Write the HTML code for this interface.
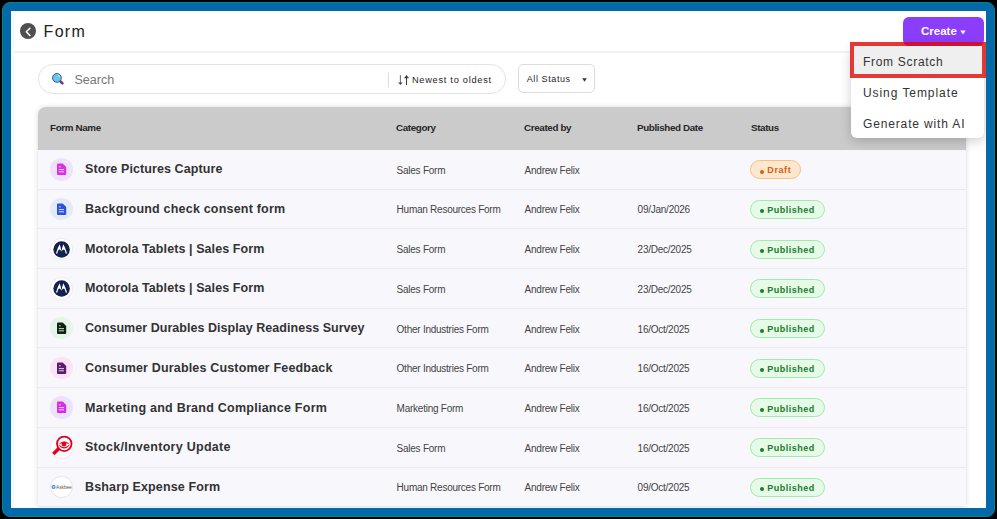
<!DOCTYPE html>
<html><head><meta charset="utf-8">
<style>
*{box-sizing:border-box;margin:0;padding:0}
html,body{width:997px;height:519px;overflow:hidden;background:#000;font-family:"Liberation Sans",sans-serif}
#frame{position:absolute;left:2px;top:2px;width:993px;height:515px;background:#036aa9;border:1px solid #08828a;border-radius:8px}
#inner{position:absolute;left:11px;top:11px;width:975px;height:497px;background:#fff;overflow:hidden}
.abs{position:absolute;white-space:nowrap}
#back{left:8.6px;top:11.5px;width:16.8px;height:16.8px;border-radius:50%;background:#4f4f4f}
#title{left:32.6px;top:11.6px;font-size:16px;line-height:18px;color:#222;letter-spacing:1.3px}
#hsep{left:2px;top:40px;width:973px;height:2px;background:#f2f2f2}
#create{left:892px;top:6px;width:81px;height:28.6px;border-radius:6px;background:#8a3dfb;color:#fff;font-size:11.5px;font-weight:bold}
#search{left:26.5px;top:53.2px;width:468.5px;height:30px;border:1px solid #e3e3e3;border-radius:15px;background:#fff}
#status{left:507.2px;top:53.2px;width:76.6px;height:28.4px;border:1px solid #dcdcdc;border-radius:5px;background:#fff}
#table{left:27px;top:96.3px;width:927.5px;height:399.7px;background:#f8f7fc;border-radius:8px 8px 0 0;box-shadow:0 0 5px rgba(0,0,0,.15);overflow:hidden}
#thead{position:absolute;left:0;top:0;width:100%;height:42.7px;background:#cbcbcb}
.th{position:absolute;top:15.1px;font-size:9.8px;font-weight:bold;color:#262626;line-height:12px;letter-spacing:-0.35px}
.row{position:absolute;left:0;width:100%;height:39.7px;border-bottom:1px solid #e9e9ee}
.ic{position:absolute;left:12px;top:8.2px;width:22.5px;height:22.5px;border-radius:50%}
.nm{position:absolute;left:47px;top:12.4px;font-size:12.5px;font-weight:bold;color:#333;line-height:14px}
.cell{position:absolute;top:14.8px;font-size:10px;color:#444;line-height:12px;letter-spacing:-0.25px}
.badge{position:absolute;left:712px;top:10.2px;height:19px;border-radius:10px;border:1px solid}
.bt{position:absolute;left:16.3px;top:3.3px;font-size:9px;line-height:12px;font-weight:bold;letter-spacing:0.5px}
.pub{background:#e5fbe8;border-color:#a2eaab;color:#1b7a2b}
.dr{background:#fde7cf;border-color:#f8c07e;color:#d2620f}
#menu{left:840px;top:35px;width:133px;height:92px;background:#fff;border-radius:6px;box-shadow:0 3px 12px rgba(0,0,0,.2)}
.mi{position:absolute;left:12px;font-size:12px;color:#333;line-height:14px;letter-spacing:0.7px}
#sel{left:839px;top:31px;width:136px;height:36px;border:4px solid rgba(222,8,6,.8);background:#efefef;background-clip:padding-box}
#ctext{position:absolute;left:18px;top:8px;line-height:13px}
#ctri{position:absolute;left:57px;top:13px}
#mag{position:absolute;left:12.2px;top:7px}
#stext{position:absolute;left:36px;top:8px;font-size:12.5px;color:#777;line-height:14px}
#sdiv{position:absolute;left:349.6px;top:8px;width:1px;height:14px;background:#ddd}
#sort{position:absolute;left:358.2px;top:9.2px}
#sorttext{position:absolute;left:373.4px;top:9.2px;font-size:9.2px;color:#1e1e1e;line-height:12px;letter-spacing:0.75px}
#sttext{position:absolute;left:7.5px;top:8.2px;font-size:9px;color:#1e1e1e;line-height:12px;letter-spacing:0.6px}
#sttri{position:absolute;left:63px;top:13px}
.dot{position:absolute;left:9px;top:8.6px;width:4px;height:4px;border-radius:50%;background:currentColor}
</style></head>
<body>
<div id="frame"></div>
<div id="inner">
  <div class="abs" id="back"><svg width="16.8" height="16.8" viewBox="0 0 16.8 16.8"><path d="M9.9 5.3 L6.3 8.8 L9.9 12.5" fill="none" stroke="#fff" stroke-width="1.6" stroke-linecap="round" stroke-linejoin="round"/></svg></div>
  <div class="abs" id="title">Form</div>
  <div class="abs" id="hsep"></div><div class="abs" style="left:1px;top:0;width:2px;height:497px;background:#f9f9fd"></div>
  <div class="abs" id="create"><span id="ctext">Create</span><svg id="ctri" width="6" height="5" viewBox="0 0 6 5"><path d="M0.3 0.4 H5.7 L3 4.6Z" fill="#fff"/></svg></div>
  <div class="abs" id="search"><svg id="mag" width="14" height="14" viewBox="0 0 14 14"><line x1="8.4" y1="8.4" x2="11.4" y2="11.4" stroke="#74338f" stroke-width="2.6" stroke-linecap="round"/><circle cx="5.9" cy="5.9" r="4.4" fill="#5ccbec" stroke="#60479a" stroke-width="1"/><path d="M6.9 3.1 Q8.2 3.6 8.6 4.8" stroke="#d4f5fd" stroke-width=".9" fill="none" stroke-linecap="round"/></svg><span id="stext">Search</span><div id="sdiv"></div><svg id="sort" width="14" height="14" viewBox="0 0 14 14"><path d="M3.4 1 V9.6" stroke="#777" stroke-width="1.1"/><path d="M1.1 8.6 H5.7 L3.4 11.1Z" fill="#444"/><path d="M9.5 3.2 V11" stroke="#3d3d3d" stroke-width="1.1"/><path d="M7.0 4.2 H12.0 L9.5 1.1Z" fill="#3d3d3d"/></svg><span id="sorttext">Newest to oldest</span></div>
  <div class="abs" id="status"><span id="sttext">All Status</span><svg id="sttri" width="5" height="4" viewBox="0 0 5 4"><path d="M0.2 0.3 H4.8 L2.5 3.8Z" fill="#333"/></svg></div>
  <div class="abs" id="table">
    <div id="thead">
      <div class="th" style="left:12px">Form Name</div>
      <div class="th" style="left:358px">Category</div>
      <div class="th" style="left:486px">Created by</div>
      <div class="th" style="left:599px">Published Date</div>
      <div class="th" style="left:713px">Status</div>
    </div>
<div class="row" style="top:42.70px"><div class="ic" style="background:#efe3fc"><svg width="23" height="23" viewBox="0 0.4 23 23"><path d="M8.1 5.9H12.7L16.2 9.4V16.3Q16.2 17.4 15.1 17.4H8.1Q7 17.4 7 16.3V7Q7 5.9 8.1 5.9Z" fill="#d930e6"/><rect x="8.9" y="8.8" width="1.9" height="0.9" fill="#fff" opacity=".8"/><rect x="8.8" y="11.5" width="5.2" height="1" fill="#fff" opacity=".8"/><rect x="8.8" y="13.7" width="5.2" height="1" fill="#fff" opacity=".8"/></svg></div><div class="nm" style="letter-spacing:0.09px">Store Pictures Capture</div><div class="cell" style="left:358.6px">Sales Form</div><div class="cell" style="left:486.6px">Andrew Felix</div><div class="cell" style="left:599.6px"></div><div class="badge dr" style="width:51px"><span class="dot"></span><span class="bt" style="letter-spacing:0.6px">Draft</span></div></div>
<div class="row" style="top:82.40px"><div class="ic" style="background:#e3eafa"><svg width="23" height="23" viewBox="0 0.4 23 23"><path d="M8.1 5.9H12.7L16.2 9.4V16.3Q16.2 17.4 15.1 17.4H8.1Q7 17.4 7 16.3V7Q7 5.9 8.1 5.9Z" fill="#2b52dc"/><rect x="8.9" y="8.8" width="1.9" height="0.9" fill="#fff" opacity=".8"/><rect x="8.8" y="11.5" width="5.2" height="1" fill="#fff" opacity=".8"/><rect x="8.8" y="13.7" width="5.2" height="1" fill="#fff" opacity=".8"/></svg></div><div class="nm" style="letter-spacing:0.2px">Background check consent form</div><div class="cell" style="left:358.6px">Human Resources Form</div><div class="cell" style="left:486.6px">Andrew Felix</div><div class="cell" style="left:599.6px">09/Jan/2026</div><div class="badge pub" style="width:75px"><span class="dot"></span><span class="bt">Published</span></div></div>
<div class="row" style="top:122.10px"><div class="ic" style="background:#fff;border:1px solid #ececf0"><svg width="21" height="21" viewBox="0 0 21 21" style="position:absolute;left:0;top:0"><circle cx="10.6" cy="10.5" r="8.25" fill="#13214e"/><path d="M4.9 14.4 Q6.6 8.6 8.7 5.2 Q9.9 8.6 10.5 12.7 Q9.5 10.3 8.0 10.5 Q6.9 11.3 6.3 14.4 Z M16.1 14.4 Q14.4 8.6 12.3 5.2 Q11.1 8.6 10.5 12.7 Q11.5 10.3 13.0 10.5 Q14.1 11.3 14.7 14.4 Z" fill="#fff"/></svg></div><div class="nm" style="letter-spacing:0.086px">Motorola Tablets | Sales Form</div><div class="cell" style="left:358.6px">Sales Form</div><div class="cell" style="left:486.6px">Andrew Felix</div><div class="cell" style="left:599.6px">23/Dec/2025</div><div class="badge pub" style="width:75px"><span class="dot"></span><span class="bt">Published</span></div></div>
<div class="row" style="top:161.80px"><div class="ic" style="background:#fff;border:1px solid #ececf0"><svg width="21" height="21" viewBox="0 0 21 21" style="position:absolute;left:0;top:0"><circle cx="10.6" cy="10.5" r="8.25" fill="#13214e"/><path d="M4.9 14.4 Q6.6 8.6 8.7 5.2 Q9.9 8.6 10.5 12.7 Q9.5 10.3 8.0 10.5 Q6.9 11.3 6.3 14.4 Z M16.1 14.4 Q14.4 8.6 12.3 5.2 Q11.1 8.6 10.5 12.7 Q11.5 10.3 13.0 10.5 Q14.1 11.3 14.7 14.4 Z" fill="#fff"/></svg></div><div class="nm" style="letter-spacing:0.086px">Motorola Tablets | Sales Form</div><div class="cell" style="left:358.6px">Sales Form</div><div class="cell" style="left:486.6px">Andrew Felix</div><div class="cell" style="left:599.6px">23/Dec/2025</div><div class="badge pub" style="width:75px"><span class="dot"></span><span class="bt">Published</span></div></div>
<div class="row" style="top:201.50px"><div class="ic" style="background:#e5f6e8"><svg width="23" height="23" viewBox="0 0.4 23 23"><path d="M8.1 5.9H12.7L16.2 9.4V16.3Q16.2 17.4 15.1 17.4H8.1Q7 17.4 7 16.3V7Q7 5.9 8.1 5.9Z" fill="#0b2510"/><rect x="8.9" y="8.8" width="1.9" height="0.9" fill="#fff" opacity=".8"/><rect x="8.8" y="11.5" width="5.2" height="1" fill="#fff" opacity=".8"/><rect x="8.8" y="13.7" width="5.2" height="1" fill="#fff" opacity=".8"/></svg></div><div class="nm" style="letter-spacing:0.04px">Consumer Durables Display Readiness Survey</div><div class="cell" style="left:358.6px">Other Industries Form</div><div class="cell" style="left:486.6px">Andrew Felix</div><div class="cell" style="left:599.6px">16/Oct/2025</div><div class="badge pub" style="width:75px"><span class="dot"></span><span class="bt">Published</span></div></div>
<div class="row" style="top:241.20px"><div class="ic" style="background:#fde3f6"><svg width="23" height="23" viewBox="0 0.4 23 23"><path d="M8.1 5.9H12.7L16.2 9.4V16.3Q16.2 17.4 15.1 17.4H8.1Q7 17.4 7 16.3V7Q7 5.9 8.1 5.9Z" fill="#5b1b70"/><rect x="8.9" y="8.8" width="1.9" height="0.9" fill="#fff" opacity=".8"/><rect x="8.8" y="11.5" width="5.2" height="1" fill="#fff" opacity=".8"/><rect x="8.8" y="13.7" width="5.2" height="1" fill="#fff" opacity=".8"/></svg></div><div class="nm" style="letter-spacing:0.165px">Consumer Durables Customer Feedback</div><div class="cell" style="left:358.6px">Other Industries Form</div><div class="cell" style="left:486.6px">Andrew Felix</div><div class="cell" style="left:599.6px">16/Oct/2025</div><div class="badge pub" style="width:75px"><span class="dot"></span><span class="bt">Published</span></div></div>
<div class="row" style="top:280.90px"><div class="ic" style="background:#eee2fb"><svg width="23" height="23" viewBox="0 0.4 23 23"><path d="M8.1 5.9H12.7L16.2 9.4V16.3Q16.2 17.4 15.1 17.4H8.1Q7 17.4 7 16.3V7Q7 5.9 8.1 5.9Z" fill="#d52fe4"/><rect x="8.9" y="8.8" width="1.9" height="0.9" fill="#fff" opacity=".8"/><rect x="8.8" y="11.5" width="5.2" height="1" fill="#fff" opacity=".8"/><rect x="8.8" y="13.7" width="5.2" height="1" fill="#fff" opacity=".8"/></svg></div><div class="nm" style="letter-spacing:0.25px">Marketing and Brand Compliance Form</div><div class="cell" style="left:358.6px">Marketing Form</div><div class="cell" style="left:486.6px">Andrew Felix</div><div class="cell" style="left:599.6px">16/Oct/2025</div><div class="badge pub" style="width:75px"><span class="dot"></span><span class="bt">Published</span></div></div>
<div class="row" style="top:320.60px"><div class="ic" style="background:#fff;border:1px solid #ececf0"><svg width="21" height="21" viewBox="0 0 21 21" style="position:absolute;left:0;top:0;overflow:visible"><path d="M7.6 11.7 L2.3 17.0" stroke="#e2001c" stroke-width="3.4"/><circle cx="13.25" cy="6.8" r="7.25" fill="#fff" stroke="#e2001c" stroke-width="1.8"/><path d="M7.1 7.7 Q13.2 0.6 19.3 7.7 Q13.2 4.2 7.1 7.7Z" fill="#e2001c"/><path d="M8.4 8.4 Q13.2 13.4 18.0 8.4" fill="none" stroke="#e2001c" stroke-width="1.1"/><circle cx="13" cy="7.3" r="2.3" fill="#e2001c"/></svg></div><div class="nm" style="letter-spacing:0.276px">Stock/Inventory Update</div><div class="cell" style="left:358.6px">Sales Form</div><div class="cell" style="left:486.6px">Andrew Felix</div><div class="cell" style="left:599.6px">16/Oct/2025</div><div class="badge pub" style="width:75px"><span class="dot"></span><span class="bt">Published</span></div></div>
<div class="row" style="top:360.30px"><div class="ic" style="background:#fff;border:1px solid #e6e6ea"><svg width="21" height="21" viewBox="0 0 21 21" style="position:absolute;left:0;top:0;overflow:visible"><circle cx="2.6" cy="10" r="2" fill="#3b8fe3"/><circle cx="2.6" cy="10" r="0.8" fill="#fff"/><text x="5.1" y="12.1" font-size="5.6" textLength="15.6" lengthAdjust="spacingAndGlyphs" fill="#555" font-family="Liberation Sans">Askbee</text></svg></div><div class="nm" style="letter-spacing:0.14px">Bsharp Expense Form</div><div class="cell" style="left:358.6px">Human Resources Form</div><div class="cell" style="left:486.6px">Andrew Felix</div><div class="cell" style="left:599.6px">09/Oct/2025</div><div class="badge pub" style="width:75px"><span class="dot"></span><span class="bt">Published</span></div></div>
  </div>
  <div class="abs" id="menu"><div class="mi" style="top:39.5px;letter-spacing:0.93px">Using Template</div><div class="mi" style="top:70.6px;letter-spacing:0.85px">Generate with AI</div></div>
  <div class="abs" id="sel"><div class="mi" style="left:9px;top:9px">From Scratch</div></div>
</div>
</body></html>
